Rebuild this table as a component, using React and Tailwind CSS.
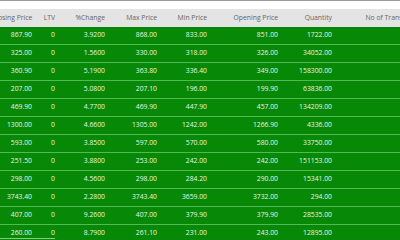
const columns = [
  { label: 'Closing Price', w: 'w-[40px]' },
  { label: 'LTV', w: 'w-[23px]' },
  { label: '%Change', w: 'w-[50px]' },
  { label: 'Max Price', w: 'w-[52px]' },
  { label: 'Min Price', w: 'w-[50px]' },
  { label: 'Opening Price', w: 'w-[71px]' },
  { label: 'Quantity', w: 'w-[54px]' },
  { label: 'No of Transactions', w: 'w-[93px]' },
];

const rows = [
  ['867.90', '0', '3.9200', '868.00', '833.00', '851.00', '1722.00'],
  ['325.00', '0', '1.5600', '330.00', '318.00', '326.00', '34052.00'],
  ['360.90', '0', '5.1900', '363.80', '336.40', '349.00', '158300.00'],
  ['207.00', '0', '5.0800', '207.10', '196.00', '199.90', '63836.00'],
  ['469.90', '0', '4.7700', '469.90', '447.90', '457.00', '134209.00'],
  ['1300.00', '0', '4.6600', '1305.00', '1242.00', '1266.90', '4336.00'],
  ['593.00', '0', '3.8500', '597.00', '570.00', '580.00', '33750.00'],
  ['251.50', '0', '3.8800', '253.00', '242.00', '242.00', '151153.00'],
  ['298.00', '0', '4.5600', '298.00', '284.20', '290.00', '15341.00'],
  ['3743.40', '0', '2.2800', '3743.40', '3659.00', '3732.00', '294.00'],
  ['407.00', '0', '9.2600', '407.00', '379.90', '379.90', '28535.00'],
  ['260.00', '0', '8.7900', '261.10', '231.00', '243.00', '12895.00'],
];

export default function App() {
  return (
    <div
      className="relative w-[400px] h-[240px] overflow-hidden bg-white border-t border-[#9a9a9a]"
      style={{ fontFamily: '"Open Sans", "Liberation Sans", sans-serif' }}
    >
      <div className="mt-[8px] ml-[-8px] w-max text-[6.8px]">
        {/* Header */}
        <div className="flex h-[18px] items-center bg-[#e4e4e4] text-[#666666]">
          {columns.map((c) => (
            <div key={c.label} className={`${c.w} shrink-0 text-right whitespace-nowrap`}>
              {c.label}
            </div>
          ))}
        </div>

        {/* Body */}
        {rows.map((r, i) => (
          <div
            key={i}
            className="flex h-[18px] items-center bg-[#078907] text-[#e6f5e6] border-b border-[#52ba52]"
          >
            {r.map((v, j) => (
              <div key={j} className={`${columns[j].w} shrink-0 text-right whitespace-nowrap`}>
                {v}
              </div>
            ))}
            <div className="w-[93px] shrink-0" />
          </div>
        ))}
      </div>

      {/* horizontal scroll thumb */}
      <div className="absolute left-0 bottom-[1px] w-[55px] h-[1px] bg-[#7fcf7f]" />
    </div>
  );
}
